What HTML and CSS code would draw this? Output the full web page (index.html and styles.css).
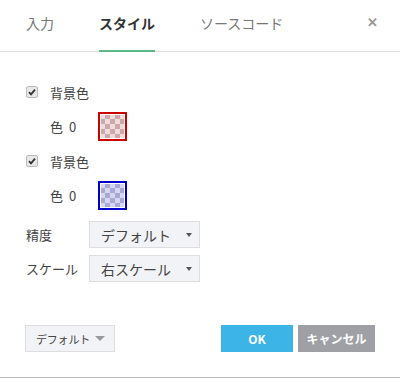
FILE: index.html
```html
<!DOCTYPE html>
<html lang="ja">
<head>
    <meta charset="UTF-8">
    <meta name="viewport" content="width=device-width, initial-scale=1.0">
    <title>スタイル</title>
    <link rel="stylesheet" href="styles.css">
</head>
<body>
    <div class="dialog">
        <div class="tabs">
            <div class="tab">入力</div>
            <div class="tab active">スタイル</div>
            <div class="tab">ソースコード</div>
            <div class="close">&#x2715;</div>
        </div>

        <div class="content">
            <label class="check-row">
                <span class="checkbox"><svg viewBox="0 0 10 10" width="10" height="10"><path d="M2 5.2 L4 7.3 L8 2.6" fill="none" stroke="#333" stroke-width="1.8"/></svg></span>
                背景色
            </label>
            <div class="color-row">
                <span class="color-label">色<span class="num">0</span></span>
                <span class="swatch swatch-red"></span>
            </div>

            <label class="check-row">
                <span class="checkbox"><svg viewBox="0 0 10 10" width="10" height="10"><path d="M2 5.2 L4 7.3 L8 2.6" fill="none" stroke="#333" stroke-width="1.8"/></svg></span>
                背景色
            </label>
            <div class="color-row">
                <span class="color-label">色<span class="num">0</span></span>
                <span class="swatch swatch-blue"></span>
            </div>

            <div class="field-row first">
                <span class="field-label">精度</span>
                <div class="select">デフォルト<span class="caret"></span></div>
            </div>
            <div class="field-row">
                <span class="field-label">スケール</span>
                <div class="select">右スケール<span class="caret"></span></div>
            </div>
        </div>

        <div class="footer">
            <div class="select small">デフォルト<span class="caret"></span></div>
            <div class="spacer"></div>
            <button class="btn btn-ok">OK</button>
            <button class="btn btn-cancel">キャンセル</button>
        </div>
    </div>
</body>
</html>
```

FILE: styles.css
```css
body {
    margin: 0;
    background: #fff;
    font-family: "Noto Sans CJK JP", "Noto Sans", sans-serif;
    color: #444;
    font-size: 13px;
}
.dialog {
    width: 400px;
    height: 378px;
    border-bottom: 1px solid #bbb;
    display: flex;
    flex-direction: column;
    box-sizing: border-box;
}
.tabs {
    display: flex;
    align-items: flex-end;
    height: 52px;
    border-bottom: 1px solid #ddd;
    box-sizing: border-box;
    padding-left: 26px;
    position: relative;
}
.tab {
    font-size: 14px;
    color: #777;
    height: 51px;
    line-height: 47px;
    margin-right: 45px;
    box-sizing: border-box;
}
.tab.active {
    color: #333;
    font-weight: bold;
    border-bottom: 2px solid #5bb98a;
    margin-bottom: -1px;
    height: 52px;
}
.close {
    position: absolute;
    right: 22px;
    top: 12px;
    color: #999;
    font-size: 13px;
    font-weight: bold;
}
.content {
    padding: 28px 26px 0 26px;
    flex: 1;
}
.check-row {
    display: flex;
    align-items: center;
    height: 24px;
    gap: 12px;
}
.checkbox {
    width: 10px;
    height: 10px;
    border: 1px solid #bbb;
    background: #e8e8e8;
    border-radius: 2px;
    display: flex;
    align-items: center;
    justify-content: center;
}
.color-row {
    display: flex;
    align-items: center;
    height: 40px;
    padding-left: 24px;
    margin-top: 2px;
    margin-bottom: 3px;
}
.color-label {
    width: 48px;
}
.num {
    margin-left: 6px;
}
.swatch {
    width: 23px;
    height: 23px;
    border: 2px solid;
    padding: 1px;
    background-clip: content-box;
    background-size: 10px 10px;
    background-position: 0 0, 5px 5px;
}
.swatch-red {
    border-color: #cc0000;
    background-color: #f0dada;
    background-image:
        linear-gradient(45deg, #c9a9a9 25%, transparent 25%, transparent 75%, #c9a9a9 75%),
        linear-gradient(45deg, #c9a9a9 25%, transparent 25%, transparent 75%, #c9a9a9 75%);
}
.swatch-blue {
    border-color: #0000cc;
    background-color: #d6d6f3;
    background-image:
        linear-gradient(45deg, #a9a9d3 25%, transparent 25%, transparent 75%, #a9a9d3 75%),
        linear-gradient(45deg, #a9a9d3 25%, transparent 25%, transparent 75%, #a9a9d3 75%);
}
.field-row {
    display: flex;
    align-items: center;
    margin-top: 7px;
}
.field-row.first {
    margin-top: 6px;
}
.field-label {
    width: 63px;
}
.select {
    width: 111px;
    height: 27px;
    box-sizing: border-box;
    border: 1px solid #ddd;
    background: #f2f3f6;
    display: flex;
    align-items: center;
    padding-left: 11px;
    position: relative;
    font-size: 14px;
}
.caret {
    position: absolute;
    right: 7px;
    top: 11px;
    border-left: 3.5px solid transparent;
    border-right: 3.5px solid transparent;
    border-top: 4px solid #555;
}
.footer {
    display: flex;
    align-items: center;
    padding: 0 25px 25px 25px;
    gap: 5px;
}
.select.small {
    width: 90px;
    font-size: 11px;
    letter-spacing: -0.2px;
    padding-left: 10px;
}
.select.small .caret {
    right: 9px;
    top: 10px;
    border-left-width: 5px;
    border-right-width: 5px;
    border-top: 5px solid #999;
}
.spacer {
    flex: 1;
}
.btn {
    height: 27px;
    border: none;
    color: #fff;
    font-weight: bold;
    font-family: inherit;
    font-size: 12px;
    padding: 0;
}
.btn-ok {
    width: 72px;
    background: #3cb4e6;
}
.btn-cancel {
    width: 77px;
    background: #9ea0a6;
}
```
